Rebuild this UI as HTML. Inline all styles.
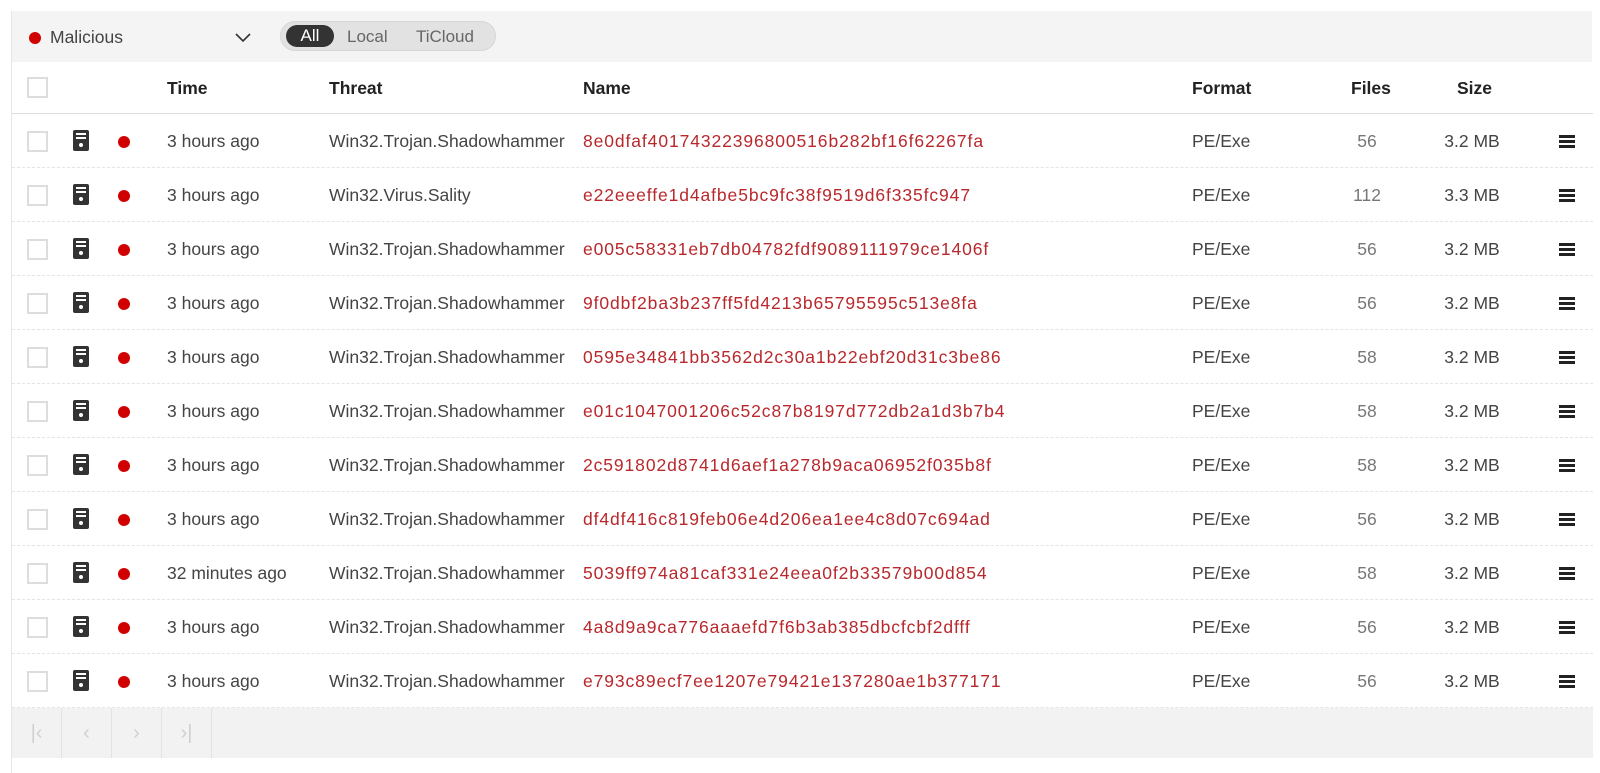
<!DOCTYPE html>
<html><head><style>
*{margin:0;padding:0;box-sizing:border-box}
body{width:1600px;height:773px;background:#fff;font-family:"Liberation Sans",sans-serif;color:#444;position:relative;overflow:hidden}
.wrap{position:absolute;left:11px;top:11px;width:1581px;height:762px;border-left:1px solid #e6e6e6}
.tb{height:51px;background:#f4f4f4;position:relative}
.dot{position:absolute;width:12px;height:12px;border-radius:50%;background:#d10000}
.pill{position:absolute;left:268px;top:10px;width:216px;height:30px;border-radius:15px;background:#e2e2e2;border:1px solid #d6d6d6;font-size:17px;color:#666}
.pill span{position:absolute;top:5px}
.pill .on{left:5px;top:3px;width:48px;height:22px;border-radius:11px;background:#333;color:#fff;text-align:center;line-height:22px}
.row{position:absolute;left:0;width:1581px;height:54px;border-bottom:1px dashed #e4e4e4}
.row div{position:absolute;top:0;line-height:54px;font-size:17.5px;white-space:nowrap}
.hd div{font-weight:bold;color:#222;font-size:17.5px;line-height:52px}
.cb{position:absolute;left:15px;width:21px;height:21px;border:2px solid #ddd;background:#fff}
.ic{position:absolute;left:61px;width:16px;height:21px;background:#333;border-radius:2px}
.ic:before{content:"";position:absolute;left:3px;top:3px;width:10px;height:2px;background:#fff;box-shadow:0 4px 0 #fff}
.ic:after{content:"";position:absolute;left:6px;top:13px;width:4px;height:4px;border-radius:50%;background:#fff}
.hash{color:#b8282c;letter-spacing:0.9px}
.ham{position:absolute;left:1547px;width:16px;height:2.5px;background:#222;box-shadow:0 5px 0 #222,0 10px 0 #222}
.pg{position:absolute;left:0;top:697px;width:1581px;height:50px;background:#f2f2f2}
.pg span{position:absolute;top:0;width:50px;height:50px;border-right:1px solid #e2e2e2;color:#d0d0d0;font-size:20px;text-align:center;line-height:50px}
</style></head><body>
<div class="wrap">
<div class="tb">
<div class="dot" style="left:17px;top:21px"></div>
<div style="position:absolute;left:38px;top:16px;font-size:17.5px;color:#444">Malicious</div>
<svg style="position:absolute;left:223px;top:22px" width="16" height="10"><path d="M1 1 L8 8 L15 1" stroke="#333" stroke-width="1.6" fill="none"/></svg>
<div class="pill"><span class="on">All</span><span style="left:66px">Local</span><span style="left:135px">TiCloud</span></div>
</div>
<div class="row hd" style="top:51px;height:52px;border-bottom:1px solid #ddd">
<span class="cb" style="top:15px"></span>
<div style="left:155px">Time</div><div style="left:317px">Threat</div><div style="left:571px">Name</div><div style="left:1180px">Format</div><div style="left:1339px">Files</div><div style="left:1445px">Size</div>
</div>
<div id="rows"></div>
<div class="pg"><span style="left:0">|&lsaquo;</span><span style="left:50px">&lsaquo;</span><span style="left:100px">&rsaquo;</span><span style="left:150px">&rsaquo;|</span></div>
</div>
<script>
var d=[["3 hours ago","Win32.Trojan.Shadowhammer","8e0dfaf40174322396800516b282bf16f62267fa","56","3.2 MB"],
["3 hours ago","Win32.Virus.Sality","e22eeeffe1d4afbe5bc9fc38f9519d6f335fc947","112","3.3 MB"],
["3 hours ago","Win32.Trojan.Shadowhammer","e005c58331eb7db04782fdf9089111979ce1406f","56","3.2 MB"],
["3 hours ago","Win32.Trojan.Shadowhammer","9f0dbf2ba3b237ff5fd4213b65795595c513e8fa","56","3.2 MB"],
["3 hours ago","Win32.Trojan.Shadowhammer","0595e34841bb3562d2c30a1b22ebf20d31c3be86","58","3.2 MB"],
["3 hours ago","Win32.Trojan.Shadowhammer","e01c1047001206c52c87b8197d772db2a1d3b7b4","58","3.2 MB"],
["3 hours ago","Win32.Trojan.Shadowhammer","2c591802d8741d6aef1a278b9aca06952f035b8f","58","3.2 MB"],
["3 hours ago","Win32.Trojan.Shadowhammer","df4df416c819feb06e4d206ea1ee4c8d07c694ad","56","3.2 MB"],
["32 minutes ago","Win32.Trojan.Shadowhammer","5039ff974a81caf331e24eea0f2b33579b00d854","58","3.2 MB"],
["3 hours ago","Win32.Trojan.Shadowhammer","4a8d9a9ca776aaaefd7f6b3ab385dbcfcbf2dfff","56","3.2 MB"],
["3 hours ago","Win32.Trojan.Shadowhammer","e793c89ecf7ee1207e79421e137280ae1b377171","56","3.2 MB"]];
var h="";d.forEach(function(r,i){var t=103+i*54;
h+='<div class="row" style="top:'+t+'px"><span class="cb" style="top:17px"></span><span class="ic" style="top:16px"></span><span class="dot" style="left:106px;top:22px"></span>'+
'<div style="left:155px">'+r[0]+'</div><div style="left:317px">'+r[1]+'</div><div class="hash" style="left:571px">'+r[2]+'</div><div style="left:1180px">PE/Exe</div><div style="left:1330px;width:50px;text-align:center;color:#777">'+r[3]+'</div><div style="left:1420px;width:80px;text-align:center">'+r[4]+'</div><span class="ham" style="top:21px"></span></div>';});
document.getElementById("rows").innerHTML=h;
</script>
</body></html>
